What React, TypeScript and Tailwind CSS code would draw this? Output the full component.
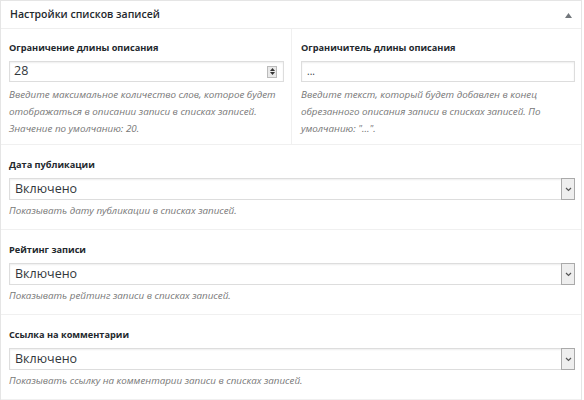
import React from 'react';

const font = { fontFamily: '"Open Sans", "Noto Sans", sans-serif' };

const Help: React.FC<{ className?: string; children: React.ReactNode }> = ({ className = 'mt-[4px]', children }) => (
    <p className={`${className} whitespace-nowrap text-[9.8px] italic leading-[17px] text-[#777]`}>{children}</p>
);

const Label: React.FC<{ children: React.ReactNode }> = ({ children }) => (
    <div className="text-[9.2px] font-bold leading-[16px] text-[#23282d]">{children}</div>
);

const SelectBox: React.FC = () => (
    <div className="mt-[5px] flex h-[22px] items-center border border-[#ddd] bg-white shadow-[inset_0_1px_2px_rgba(0,0,0,0.07)]">
        <span className="flex-1 pl-[5px] text-[12.5px] text-[#32373c]">Включено</span>
        <span className="-mr-px flex h-[22px] w-[14px] items-center justify-center border border-[#aaa] bg-[#eee]">
            <svg width="7" height="5" viewBox="0 0 7 5">
                <path d="M1 1 L3.5 3.5 L6 1" stroke="#555" strokeWidth="1.2" fill="none" />
            </svg>
        </span>
    </div>
);

const rows = [
    { label: 'Дата публикации', help: 'Показывать дату публикации в списках записей.' },
    { label: 'Рейтинг записи', help: 'Показывать рейтинг записи в списках записей.' },
    { label: 'Ссылка на комментарии', help: 'Показывать ссылку на комментарии записи в списках записей.' },
];

const App: React.FC = () => {
    return (
        <div className="h-[400px] w-[584px] bg-white" style={font}>
            <div className="mr-[2px] border border-[#e5e5e5] bg-white">
                <div className="flex h-[28px] items-center justify-between border-b border-[#eee] pl-[9px] pr-[9px]">
                    <h2 className="text-[10.5px] font-semibold text-[#23282d]">Настройки списков записей</h2>
                    <svg width="7" height="5" viewBox="0 0 7 5" className="mt-[2px]">
                        <path d="M0 5 L3.5 0 L7 5 Z" fill="#72777c" />
                    </svg>
                </div>

                <div className="flex border-b border-[#f0f0f0]">
                    <div className="w-[291px] border-r border-[#f0f0f0] pb-[7px] pl-[8px] pr-[7px] pt-[11px]">
                        <Label>Ограничение длины описания</Label>
                        <div className="mt-[5px] flex h-[21px] items-center border border-[#ddd] bg-white shadow-[inset_0_1px_2px_rgba(0,0,0,0.07)]">
                            <span className="flex-1 pl-[4px] text-[12.5px] text-[#32373c]">28</span>
                            <span className="mr-[6px] flex h-[12px] w-[10px] flex-col items-center justify-center gap-[1px] border border-[#bbb] bg-[#e9e9e9]">
                                <svg width="5" height="3" viewBox="0 0 5 3"><path d="M0 3 L2.5 0 L5 3 Z" fill="#333" /></svg>
                                <svg width="5" height="3" viewBox="0 0 5 3"><path d="M0 0 L2.5 3 L5 0 Z" fill="#333" /></svg>
                            </span>
                        </div>
                        <Help>
                            Введите максимальное количество слов, которое будет<br />
                            отображаться в описании записи в списках записей.<br />
                            Значение по умолчанию: 20.
                        </Help>
                    </div>
                    <div className="flex-1 pb-[7px] pl-[9px] pr-[6px] pt-[11px]">
                        <Label>Ограничитель длины описания</Label>
                        <div className="mt-[5px] flex h-[21px] items-center border border-[#ddd] bg-white shadow-[inset_0_1px_2px_rgba(0,0,0,0.07)]">
                            <span className="pl-[5px] text-[10px] text-[#32373c]">...</span>
                        </div>
                        <Help>
                            Введите текст, который будет добавлен в конец<br />
                            обрезанного описания записи в списках записей. По<br />
                            умолчанию: "...".
                        </Help>
                    </div>
                </div>

                {rows.map(row => (
                    <div key={row.label} className="h-[85px] border-b border-[#f0f0f0] pl-[8px] pr-[6px] pt-[12px]">
                        <Label>{row.label}</Label>
                        <SelectBox />
                        <Help className="mt-[2px]">{row.help}</Help>
                    </div>
                ))}
            </div>
        </div>
    );
};

export default App;
